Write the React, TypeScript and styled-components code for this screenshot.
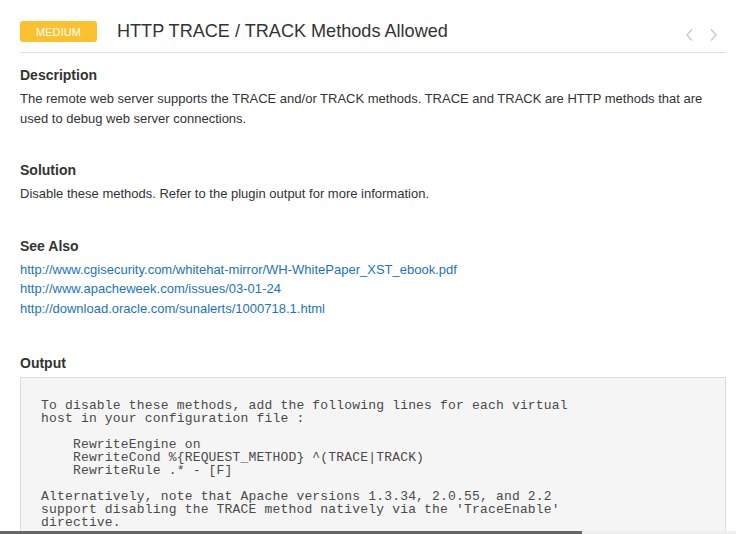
import React from 'react'
import styled, { createGlobalStyle } from 'styled-components'

const GlobalStyle = createGlobalStyle`
  html, body {
    margin: 0;
    padding: 0;
    background: #fff;
  }
  body {
    font-family: 'Liberation Sans', Arial, sans-serif;
    color: #333;
  }
`

const Page = styled.div`
  padding: 0 10px 0 20px;
`

const Header = styled.div`
  display: flex;
  align-items: center;
  padding: 21px 0 10px;
  border-bottom: 1px solid #ddd;
`

const Badge = styled.span<{ $color: string }>`
  display: inline-flex;
  align-items: center;
  justify-content: center;
  width: 77px;
  height: 21px;
  border-radius: 3px;
  background: ${(p) => p.$color};
  color: #fff;
  font-size: 11px;
  letter-spacing: 0.1px;
`

const Title = styled.h1`
  flex: 1;
  margin: 0 0 0 20px;
  font-size: 18.1px;
  font-weight: normal;
  line-height: 21px;
  color: #333;
`

const Nav = styled.div`
  display: flex;
  gap: 15px;
  margin-top: 6px;
  margin-right: 8px;
`

const NavButton = styled.button`
  border: 0;
  padding: 0;
  background: none;
  display: flex;
  cursor: pointer;
`

const Section = styled.section<{ $gap?: number }>`
  margin-top: ${(p) => p.$gap ?? 32}px;
`

const Heading = styled.h2`
  margin: 0 0 4px;
  font-size: 14px;
  font-weight: bold;
  line-height: 20px;
  color: #333;
`

const Text = styled.p`
  margin: 0;
  font-size: 13px;
  line-height: 19.5px;
  color: #333;
`

const LinkList = styled.div`
  display: flex;
  flex-direction: column;
`

const Link = styled.a`
  font-size: 13px;
  line-height: 19.5px;
  color: #1a75bb;
  text-decoration: none;
`

const OutputBox = styled.pre`
  margin: 1px 0 0;
  padding: 21px 20px 20px;
  background: #f5f5f5;
  border: 1px solid #ddd;
  font-family: 'Liberation Mono', 'Courier New', monospace;
  font-size: 13px;
  line-height: 13px;
  letter-spacing: 0.18px;
  color: #4a4a4a;
  white-space: pre;
  overflow: hidden;
`

const ScrollTrack = styled.div`
  position: fixed;
  left: 0;
  right: 0;
  bottom: 0;
  height: 3px;
  background: #eee;
`

const ScrollThumb = styled.div`
  width: 582px;
  height: 100%;
  background: #666;
`

const Chevron = ({ dir }: { dir: 'left' | 'right' }) => (
  <svg width="9" height="14" viewBox="0 0 9 14" fill="none">
    <path
      d={dir === 'left' ? 'M7 1.5 2 7l5 5.5' : 'M2 1.5 7 7l-5 5.5'}
      stroke="#c8c8c8"
      strokeWidth="1.3"
    />
  </svg>
)

const links = [
  'http://www.cgisecurity.com/whitehat-mirror/WH-WhitePaper_XST_ebook.pdf',
  'http://www.apacheweek.com/issues/03-01-24',
  'http://download.oracle.com/sunalerts/1000718.1.html',
]

const output = `To disable these methods, add the following lines for each virtual
host in your configuration file :

    RewriteEngine on
    RewriteCond %{REQUEST_METHOD} ^(TRACE|TRACK)
    RewriteRule .* - [F]

Alternatively, note that Apache versions 1.3.34, 2.0.55, and 2.2
support disabling the TRACE method natively via the 'TraceEnable'
directive.

Nessus sent the following TRACE request :

------------------------------ snip ------------------------------
TRACE /Nessus1234567890.html HTTP/1.1
Connection: Close
Host: 192.168.1.10
Pragma: no-cache
User-Agent: Mozilla/4.0 (compatible; MSIE 8.0; Windows NT 5.1; Trident/4.0)
Accept: image/gif, image/x-xbitmap, image/jpeg, image/pjpeg, image/png, */*
Accept-Language: en
Accept-Charset: iso-8859-1,*,utf-8
------------------------------ snip ------------------------------`

export default function App() {
  return (
    <>
      <GlobalStyle />
      <Page>
        <Header>
          <Badge $color="#fcc12e">MEDIUM</Badge>
          <Title>HTTP TRACE / TRACK Methods Allowed</Title>
          <Nav>
            <NavButton aria-label="Previous">
              <Chevron dir="left" />
            </NavButton>
            <NavButton aria-label="Next">
              <Chevron dir="right" />
            </NavButton>
          </Nav>
        </Header>

        <Section $gap={12}>
          <Heading>Description</Heading>
          <Text>
            The remote web server supports the TRACE and/or TRACK methods. TRACE and TRACK are HTTP
            methods that are used to debug web server connections.
          </Text>
        </Section>

        <Section>
          <Heading>Solution</Heading>
          <Text>Disable these methods. Refer to the plugin output for more information.</Text>
        </Section>

        <Section>
          <Heading>See Also</Heading>
          <LinkList>
            {links.map((href) => (
              <Link key={href} href={href}>
                {href}
              </Link>
            ))}
          </LinkList>
        </Section>

        <Section $gap={35}>
          <Heading>Output</Heading>
          <OutputBox>{output}</OutputBox>
        </Section>
      </Page>
      <ScrollTrack>
        <ScrollThumb />
      </ScrollTrack>
    </>
  )
}
